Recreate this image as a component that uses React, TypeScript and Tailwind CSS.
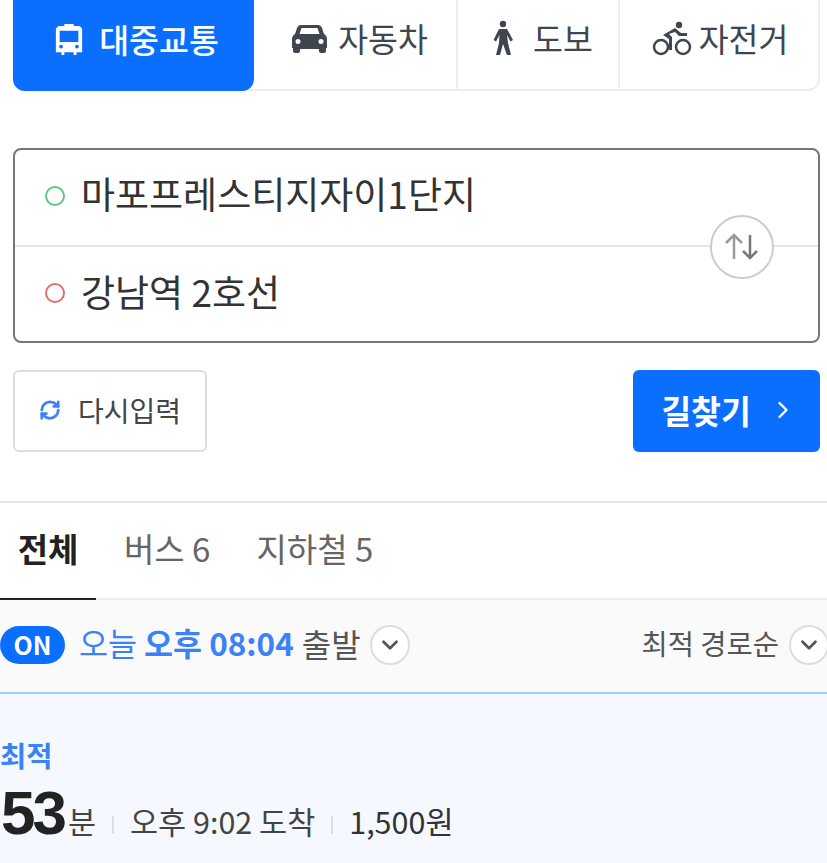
import { ChevronDown, ChevronRight, RefreshCw } from 'lucide-react';

const kr = "font-['Noto_Sans_CJK_KR','Noto_Sans',sans-serif]";

function BusIcon() {
  return (
    <svg width="30" height="34" viewBox="0 0 32 36" fill="#fff">
      <path fillRule="evenodd" d="M11 1h10v2h5c2 0 4 2 4 4v24h-6v3h-3v-3H11v3H8v-3H2V7c0-2 2-4 4-4h5V1zM6 8v12h20V8H6zm1.500 15a2 2 0 1 0 0 4 2 2 0 0 0 0-4zm17 0a2 2 0 1 0 0 4 2 2 0 0 0 0-4z" />
    </svg>
  );
}

function CarIcon() {
  return (
    <svg width="35" height="29" viewBox="0 0 35 29" fill="#3f4650">
      <path fillRule="evenodd" d="M9 1h17c2 0 3 1 4 3l2 6c2 1 3 3 3 5v9h-1v3c0 1-1 2-2 2h-3c-1 0-2-1-2-2v-2H8v2c0 1-1 2-2 2H3c-1 0-2-1-2-2v-3H0v-9c0-2 1-4 3-5l2-6c1-2 2-3 4-3zm.5 3L7.500 10h20l-2-6h-16zM6 15a2.500 2.500 0 1 0 0 5 2.500 2.500 0 0 0 0-5zm23 0a2.500 2.500 0 1 0 0 5 2.500 2.500 0 0 0 0-5z" />
    </svg>
  );
}

function WalkIcon() {
  return (
    <svg width="22" height="37" viewBox="0 0 22 37" fill="#3f4650">
      <circle cx="11" cy="4" r="3.200" />
      <path d="M7 9h8l6 11-2.500 1.500L15 15l1 8 3 12h-4l-4-11-3 11H4l3-12 .5-8-3.500 6.500L1.500 20 7 9z" />
    </svg>
  );
}

function BikeIcon() {
  return (
    <svg width="40" height="36" viewBox="0 0 40 36" fill="none">
      <circle cx="9" cy="26" r="7" stroke="#3f4650" strokeWidth="2.500" />
      <circle cx="31" cy="26" r="7" stroke="#3f4650" strokeWidth="2.500" />
      <circle cx="27" cy="4" r="3.200" fill="#3f4650" />
      <path d="M23 7l-12 7 6 4v11h3V16l-3-3 6-2 4 4h8v-3h-6L23 7z" fill="#3f4650" />
    </svg>
  );
}

function SwapIcon() {
  return (
    <svg width="38" height="30" viewBox="0 0 38 30" fill="none" strokeWidth="2.500">
      <path d="M11 27V4M3 11l8-8 8 8" stroke="#9a9a9a" />
      <path d="M27 3v23M20 19l7 7 7-7" stroke="#777" />
    </svg>
  );
}

const tabClass = 'flex items-center justify-center pb-[12px] text-[32.5px] text-[#3f4650]';

export default function App() {
  return (
    <div className={`h-[863px] w-[827px] overflow-hidden bg-white ${kr}`}>
      {/* Mode tabs */}
      <div className="pl-[13px] pr-[7px]">
        <div className="flex h-[91px] rounded-b-xl border-r-2 border-b-2 border-[#eeeeee]">
          <div className="-mb-[2px] flex w-[241px] items-center justify-center gap-[15px] rounded-b-xl bg-[#0a6fff] pb-[12px] pl-[6px] text-[32.5px] font-medium text-white">
            <BusIcon />
            <span>대중교통</span>
          </div>
          <div className={`${tabClass} w-[204px] gap-[11px] border-r-2 border-[#eeeeee] pl-[10px]`}>
            <CarIcon />
            <span>자동차</span>
          </div>
          <div className={`${tabClass} w-[162px] gap-[19px] border-r-2 border-[#eeeeee] pl-[9px]`}>
            <WalkIcon />
            <span>도보</span>
          </div>
          <div className={`${tabClass} flex-1 gap-[7px] pl-[2px]`}>
            <BikeIcon />
            <span>자전거</span>
          </div>
        </div>
      </div>

      {/* Route input */}
      <div className="mt-[57px] mr-[7px] ml-[13px]">
        <div className="relative rounded-lg border-2 border-[#777777]">
          <div className="flex h-[97px] items-center gap-[16px] border-b-2 border-[#e5e5e5] pb-[4px] pl-[30px] text-[37px] text-[#333]">
            <span className="h-[20px] w-[20px] rounded-full border-2 border-[#5fc583]" />
            <span className="pb-[3px]">마포프레스티지자이1단지</span>
          </div>
          <div className="flex h-[94px] items-center gap-[16px] pb-[2px] pl-[30px] text-[37px] text-[#333]">
            <span className="h-[20px] w-[20px] rounded-full border-2 border-[#e07070]" />
            <span className="pb-[3px]">강남역 2호선</span>
          </div>
          <div className="absolute top-[65px] right-[44px] flex h-[64px] w-[64px] items-center justify-center rounded-full border-2 border-[#cccccc] bg-white">
            <SwapIcon />
          </div>
        </div>

        <div className="mt-[27px] flex justify-between">
          <div className="flex h-[82px] w-[194px] items-center justify-center gap-[17px] rounded-md border-2 border-[#dddddd] pb-[2px] text-[28px] text-[#444]">
            <RefreshCw size={22} strokeWidth={3} className="text-[#3b82f6]" />
            <span>다시입력</span>
          </div>
          <div className="flex h-[82px] w-[187px] items-center justify-center gap-[18px] rounded-md bg-[#0a6fff] pb-[2px] pl-[5px] text-[32.5px] font-bold text-white">
            <span>길찾기</span>
            <ChevronRight size={28} strokeWidth={2} />
          </div>
        </div>
      </div>

      {/* Filter tabs */}
      <div className="mt-[49px] flex h-[99px] border-y-2 border-t-[#e5e5e5] border-b-[#eeeeee]">
        <div className="-mb-[2px] flex w-[96px] items-center justify-center border-b-2 border-[#222] pb-[4px] text-[33px] font-bold text-[#222]">전체</div>
        <div className="ml-[28px] flex items-center pb-[4px] text-[33px] text-[#666]">버스 6</div>
        <div className="ml-[46px] flex items-center pb-[4px] text-[33px] text-[#666]">지하철 5</div>
      </div>

      {/* Departure time + sort */}
      <div className="flex h-[94px] items-center justify-between border-b-2 border-[#a6c8f5] bg-[#fafafa] pb-[2px]">
        <div className="flex items-center">
          <span className="flex h-[38px] w-[65px] items-center justify-center rounded-full bg-[#0a6fff] text-[25px] font-bold text-white">ON</span>
          <span className="ml-[14px] pb-[5px] text-[31.5px] text-[#3b82f6]">오늘 <b className="font-bold">오후 08:04</b></span>
          <span className="ml-[8px] pb-[5px] text-[32px] text-[#555]">출발</span>
          <span className="ml-[9px] flex h-[40px] w-[40px] items-center justify-center rounded-full border-2 border-[#dddddd] bg-white">
            <ChevronDown size={26} strokeWidth={2.500} className="text-[#555]" />
          </span>
        </div>
        <div className="flex items-center">
          <span className="pb-[4px] text-[28.5px] text-[#555]">최적 경로순</span>
          <span className="-mr-[2px] ml-[10px] flex h-[40px] w-[40px] shrink-0 items-center justify-center rounded-full border-2 border-[#dddddd] bg-white">
            <ChevronDown size={26} strokeWidth={2.500} className="text-[#555]" />
          </span>
        </div>
      </div>

      {/* Best route */}
      <div className="h-[169px] bg-[#f5f8ff] pt-[41px]">
        <div className="text-[28.5px] leading-[40px] font-bold text-[#3b82f6]">최적</div>
        <div className="mt-[4px] flex items-baseline pl-[1px] text-[30.5px] text-[#444]">
          <span className="font-['Liberation_Sans',sans-serif] text-[62px] leading-[68px] font-bold tracking-[-3px] text-[#222]">53</span>
          <span className="ml-[4px]">분</span>
          <span className="mx-[16px] h-[18px] w-[2px] bg-[#dddddd]" />
          <span>오후 9:02 도착</span>
          <span className="mx-[16px] h-[18px] w-[2px] bg-[#dddddd]" />
          <span className="text-[#333]">1,500원</span>
        </div>
      </div>
    </div>
  );
}
